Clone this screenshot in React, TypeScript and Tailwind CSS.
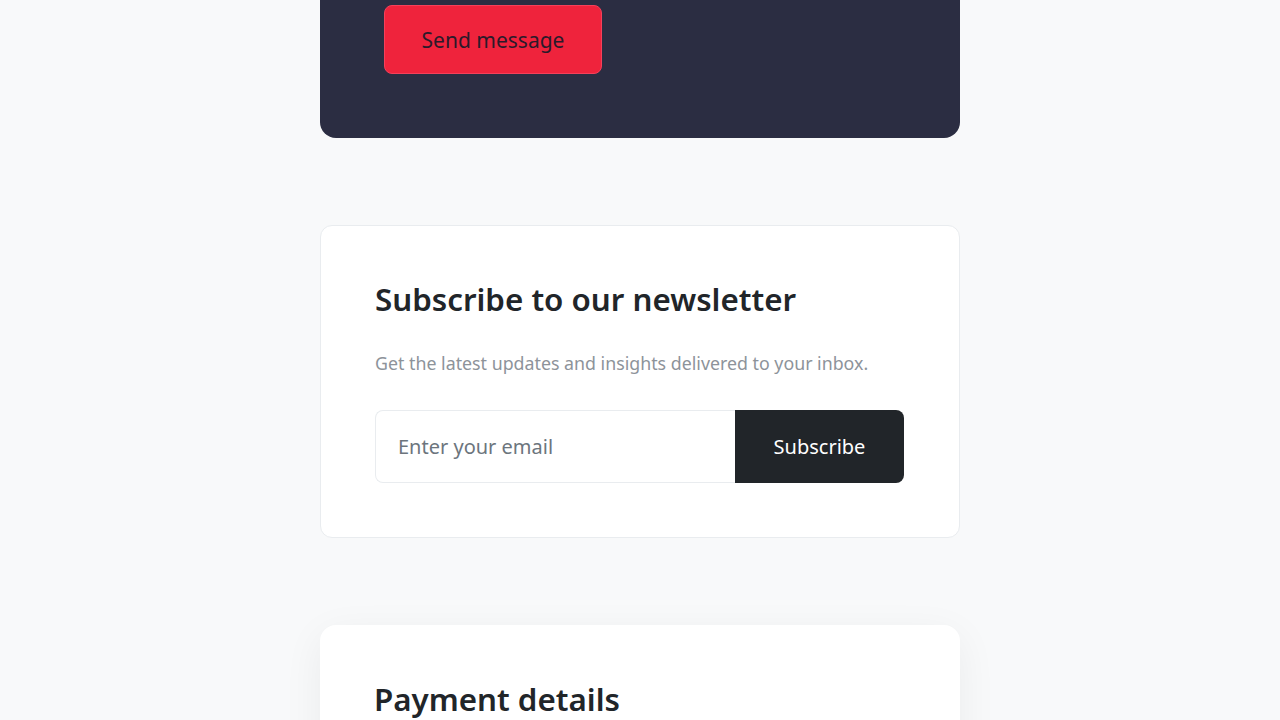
export default function App() {
  const font = { fontFamily: '"Noto Sans", "Open Sans", sans-serif' };
  return (
    <div className="min-h-[720px] bg-[#f8f9fa] overflow-hidden" style={font}>
      <div className="w-[640px] mx-auto flex flex-col">
        <div className="bg-[#2b2d42] rounded-b-2xl pt-[5px] pb-16 px-16">
          <button className="w-[218px] h-[69px] pt-[3px] bg-[#ef233c] border border-[#f5405a] rounded-lg text-[21px] text-[#2b1a2a]">
            Send message
          </button>
        </div>

        <div className="mt-[87px] bg-white border border-[#e9ecef] rounded-xl p-[54px]">
          <h2 className="text-[31.3px] font-semibold leading-[38px] text-[#212529]">Subscribe to our newsletter</h2>
          <p className="mt-[32px] text-[17.8px] leading-[27px] text-[#8d939a]">
            Get the latest updates and insights delivered to your inbox.
          </p>
          <div className="mt-[33px] flex h-[73px] pr-px">
            <input
              className="flex-1 min-w-0 border border-[#e9ecef] border-r-0 rounded-l-lg px-[22px] text-[20px] text-[#212529] placeholder:text-[#6c757d] outline-none"
              placeholder="Enter your email"
            />
            <button className="w-[169px] bg-[#212529] rounded-r-lg text-white text-[20px]">Subscribe</button>
          </div>
        </div>

        <div className="mt-[87px] bg-white rounded-2xl shadow-[0_10px_40px_rgba(0,0,0,0.06)] px-[54px] pt-[55px] pb-16">
          <h2 className="text-[31.3px] font-semibold leading-[38px] text-[#212529]">Payment details</h2>
        </div>
      </div>
    </div>
  );
}
